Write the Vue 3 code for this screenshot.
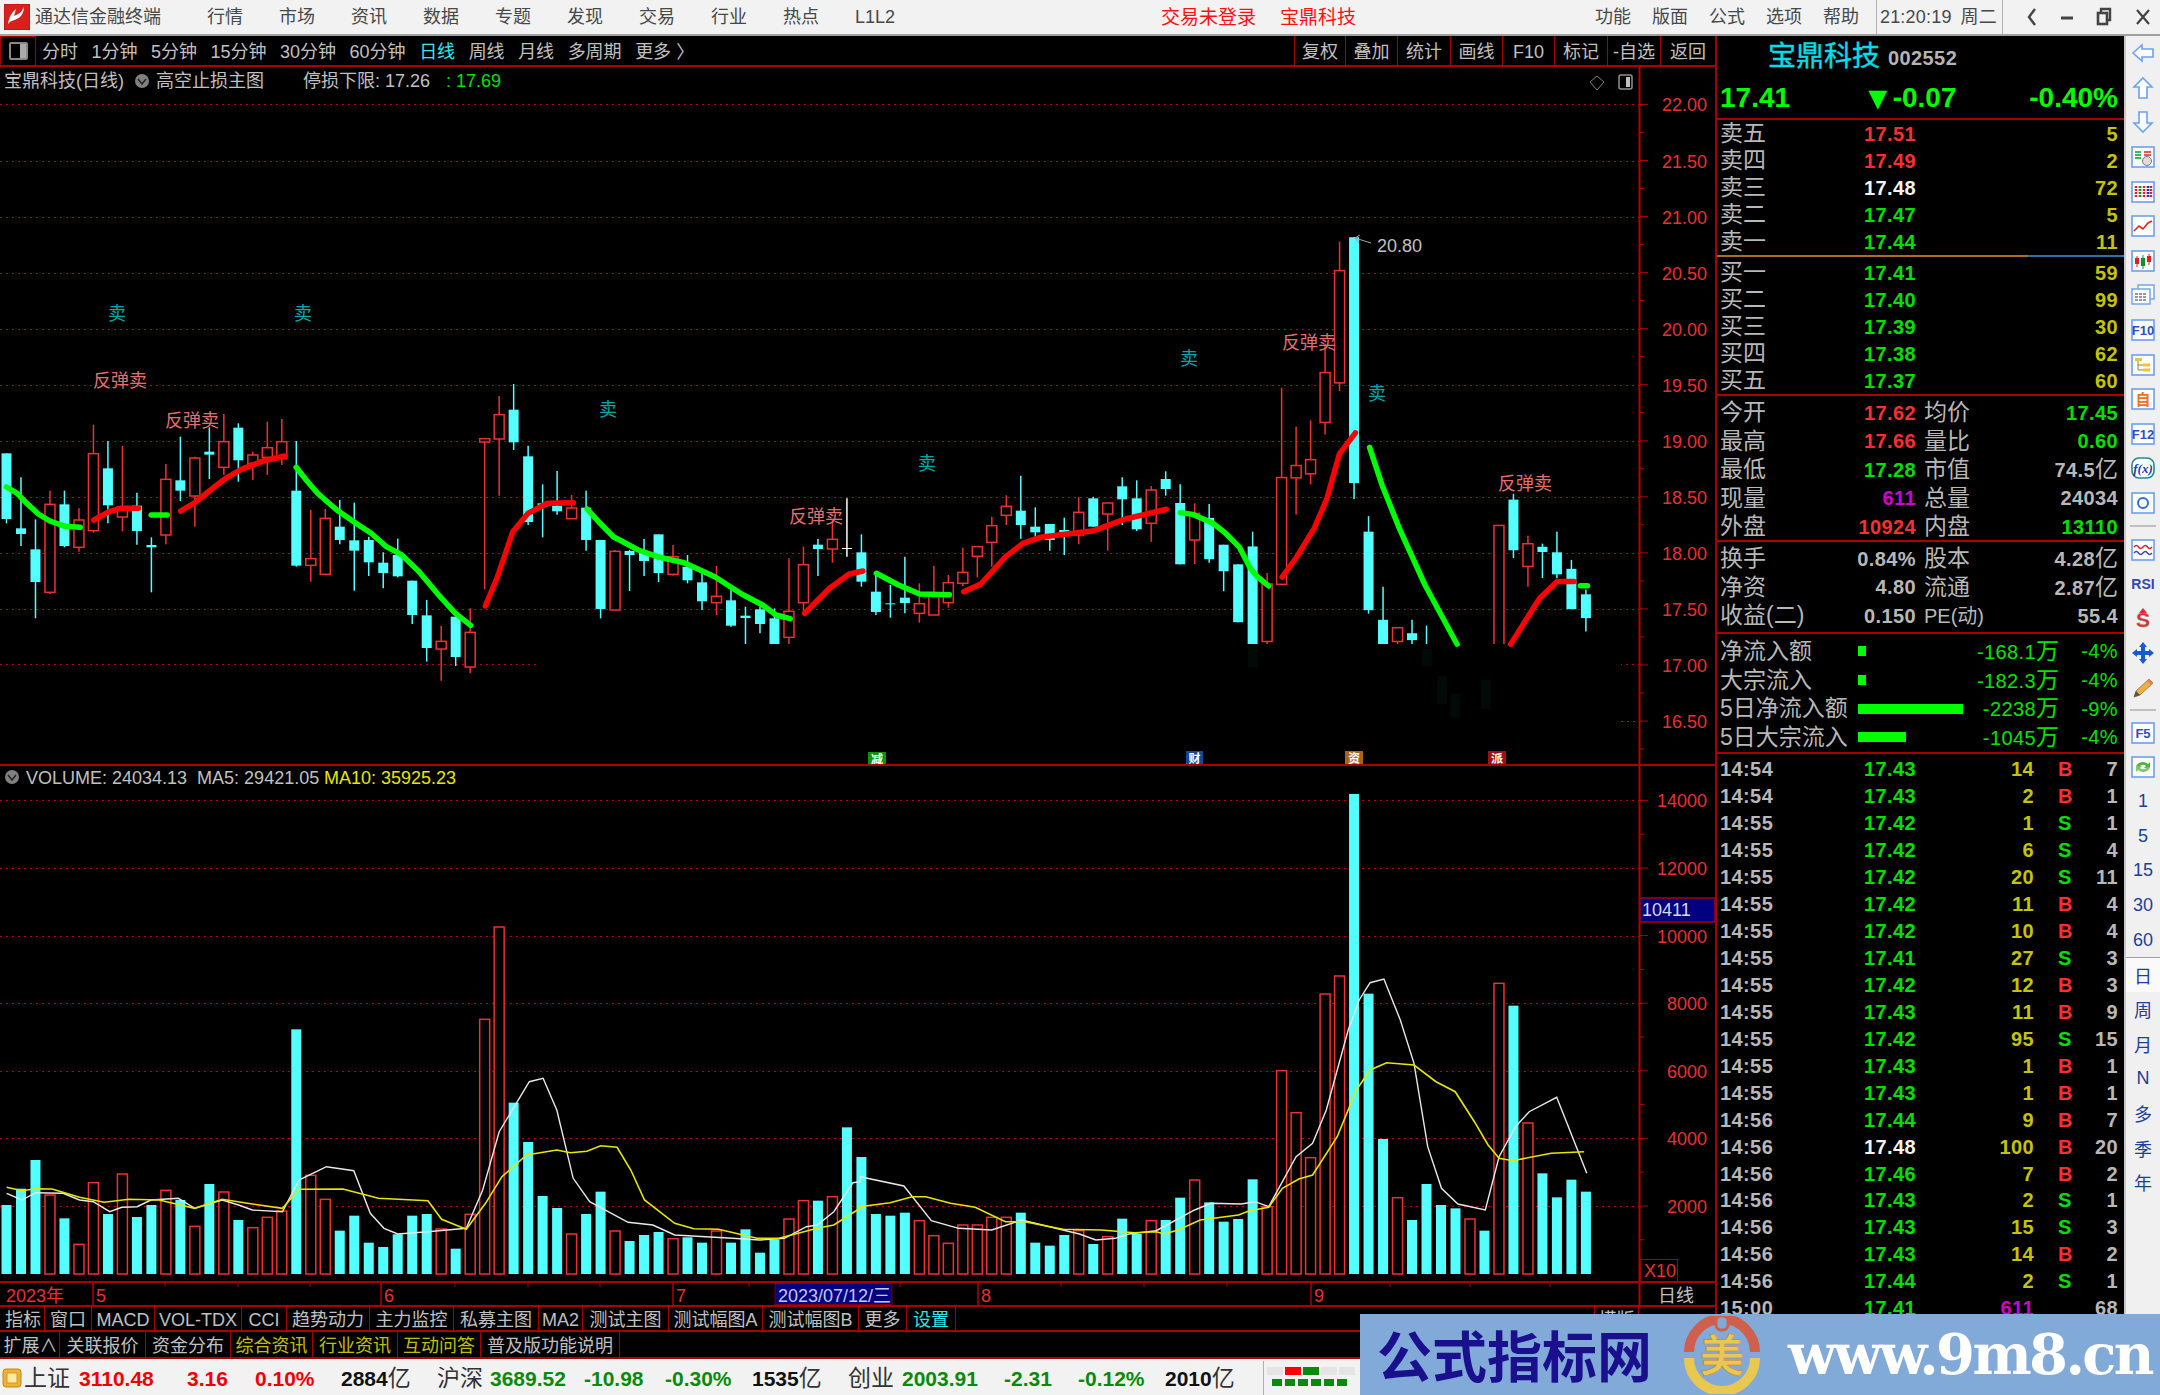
<script setup>
const X = i => 6.5 + 14.49 * i
const z7y = z => 340 + z / 3
const z9y = z => 220 + z / 2.904
const pY = p => 721 - (p - 16.5) * 112.1
const vY = v => 1273.6 - v * 0.0338

const c7 = [
[0,'c',340,537,340,550],[1,'c',565,582,412,618],[2,'c',628,726,538,835],[3,'r',493,757,452,762],[4,'c',493,618,452,622],
[5,'r',540,622,505,635],[6,'r',341,572,254,578],[7,'c',385,496,303,550],[8,'r',500,531,318,574],[9,'c',497,573,458,614],
[10,'c',615,622,592,757],[11,'r',418,585,372,613],[12,'c',421,452,290,483],[13,'r',354,468,350,560],[14,'c',335,344,262,417],
[15,'r',305,382,222,405],[16,'c',263,361,250,425],[17,'r',345,370,335,420],[18,'r',323,352,245,405],[19,'r',305,356,237,375],
[20,'c',452,677,303,680],[21,'r',656,676,510,725],[22,'r',535,703,507,703],[23,'c',560,600,480,613],[24,'c',601,632,488,752],
[25,'c',600,667,590,708],[26,'c',668,699,637,745],[27,'c',645,709,596,712],[28,'c',722,825,722,852],[29,'c',826,924,780,965],
[30,'r',904,927,857,1022],[31,'c',830,951,830,978],[32,'r',877,981,805,1000],[33,'r',296,306,296,748],[34,'r',224,297,168,467],
[35,'c',209,307,132,330],[36,'c',349,546,317,555],[37,'c',490,500,433,592],[38,'c',497,514,393,524],[39,'r',504,536,465,536],
[40,'c',503,600,452,632],[41,'c',600,807,600,835],[42,'r',634,810,630,810],[43,'c',633,645,630,753],[44,'c',637,663,597,708],
[45,'c',583,699,583,726],[46,'r',650,703,615,707],[47,'c',680,721,645,730],[48,'c',727,784,700,810],[49,'r',769,788,678,825],
[50,'c',781,857,750,860],[51,'c',827,834,800,920],[52,'c',808,852,800,880],[53,'c',835,920,805,920],[54,'r',814,892,655,920],
[55,'r',674,788,620,815],[56,'c',614,627,597,708],[57,'r',598,627,540,668],[58,'w',624,627,475,650],[59,'c',637,725,583,740],
[60,'c',755,816,695,825],[61,'c',790,793,735,833],[62,'c',773,789,650,820],[63,'r',791,820,730,848],[64,'r',765,825,678,825],
[65,'r',728,788,705,803],[66,'r',697,730,623,738],[67,'r',620,649,620,712],[68,'r',557,607,530,680],[69,'r',499,526,466,555],
[70,'c',512,555,407,596],[71,'c',560,577,502,590],[72,'c',552,600,552,632],[73,'c',570,577,533,645],[74,'r',517,585,472,613],
[75,'c',475,560,470,560],[76,'r',489,522,489,632],[77,'c',439,478,412,555],[78,'c',475,568,421,573],[79,'r',450,550,438,605],
[80,'c',417,447,394,467],[81,'c',489,673,433,673],[82,'r',520,600,490,672]]
const c9 = [
[83,'c',865,985,825,995],[84,'c',943,1020,943,1078],[85,'c',1000,1168,1000,1168],[86,'c',948,1240,905,1240],[87,'r',1057,1224,1025,1240],
[88,'r',748,1058,487,1058],[89,'r',713,749,600,855],[90,'r',696,737,582,768],[91,'r',443,588,360,623],[92,'r',147,473,63,497],
[93,'c',50,764,50,810],[94,'c',905,1133,860,1143],[95,'c',1161,1240,1065,1240],[96,'r',1184,1224,1184,1240],[97,'c',1200,1220,1161,1240],
[98,'c',1240,1240,1178,1240],[103,'r',887,1240,887,1240],[104,'c',812,959,795,982],[105,'r',940,1006,917,1065],[106,'c',949,964,940,1040],
[107,'c',965,1029,905,1040],[108,'c',1013,1130,987,1130],[109,'c',1087,1156,1073,1195]]
const candleColor = { c: '#54ffff', r: '#f03030', w: '#ffffff' }
const candles = [
  ...c7.map(d => [d[0], d[1], z7y(d[2]), z7y(d[3]), z7y(d[4]), z7y(d[5])]),
  ...c9.map(d => [d[0], d[1], z9y(d[2]), z9y(d[3]), z9y(d[4]), z9y(d[5])])
].map(d => ({ x: X(d[0]), col: candleColor[d[1]], red: d[1] === 'r', bt: d[2], bb: d[3], wt: d[4], wb: d[5] }))

const seg = (pts, xf, yf) => pts.map(p => `${(xf(p[0])).toFixed(1)},${(yf(p[1])).toFixed(1)}`).join(' ')
const x7 = z => z / 2.613, x8 = z => 600 + z / 2.613, x9 = z => 1150 + z / 2.8
const thick = [
 ['#00ff00', seg([[17,441],[45,460],[70,490],[100,522],[130,543],[170,559],[210,562]], x7, z7y)],
 ['#ff0000', seg([[245,540],[285,515],[315,505],[362,505]], x7, z7y)],
 ['#00ff00', seg([[395,525],[437,525]], x7, z7y)],
 ['#ff0000', seg([[472,513],[510,487],[550,450],[590,415],[630,388],[690,362],[745,348]], x7, z7y)],
 ['#00ff00', seg([[774,382],[800,420],[830,460],[880,510],[930,550],[970,580],[1010,620],[1050,645],[1095,695],[1150,770],[1190,820],[1230,856]], x7, z7y)],
 ['#ff0000', seg([[1268,798],[1300,710],[1340,575],[1380,520],[1430,490],[1498,488]], x7, z7y)],
 ['#00ff00', seg([[1534,507],[1568,550]], x7, z7y) + ' ' + seg([[35,590],[100,630],[150,650],[220,668],[300,710],[370,762],[425,795],[460,825],[497,836]], x8, z7y)],
 ['#ff0000', seg([[535,820],[600,745],[650,703],[687,693]], x8, z7y)],
 ['#00ff00', seg([[722,700],[780,735],[835,762],[913,764]], x8, z7y)],
 ['#ff0000', seg([[950,755],[995,732],[1060,650],[1105,610],[1150,592],[1290,572],[1370,538],[1480,508]], x8, z7y)],
 ['#00ff00', seg([[85,850],[120,855],[175,880],[210,908],[250,950],[280,1010],[300,1035],[332,1063]], x9, z9y)],
 ['#ff0000', seg([[370,1037],[410,980],[460,895],[495,810],[530,680],[575,618]], x9, z9y)],
 ['#00ff00', seg([[615,660],[650,770],[700,900],[770,1060],[860,1232]], x9, z9y)],
 ['#ff0000', seg([[1010,1232],[1090,1100],[1140,1050],[1187,1050]], x9, z9y)],
 ['#00ff00', seg([[1205,1062],[1225,1062]], x9, z9y)]
].map(([col, pts]) => ({ col, pts }))
const ghost = [[288,1232,1300],[775,1245,1295],[818,1325,1405],[855,1375,1445],[940,1335,1420]]
  .map(g => ({ x: x9(g[0]) - 5, y: z9y(g[1]), h: (g[2] - g[1]) / 2.904 }))

const mainGrid = [17.5,18,18.5,19,19.5,20,20.5,21,21.5,22].map(pY)
const axisP = ['22.00','21.50','21.00','20.50','20.00','19.50','19.00','18.50','18.00','17.50','17.00','16.50'].map(t => ({ t, y: pY(+t) + 7 }))
const mainTicks = []
for (let k = 0; k <= 23; k++) mainTicks.push({ y: pY(16.25 + k * 0.25), l: k % 2 ? 8 : 4 })
const sell = [[117,313],[303,313],[608,409],[927,463],[1189,358],[1377,393]].map(p => ({ x: p[0], y: p[1] }))
const rebound = [[93,387],[165,427],[789,523],[1282,349],[1498,490]].map(p => ({ x: p[0], y: p[1] }))
const badges = [
 { x: 868, w: 18, y: 752, f: '#109010', t: '减' }, { x: 1186, w: 17, y: 751, f: '#104a90', t: '财' },
 { x: 1345, w: 18, y: 751, f: '#a86414', t: '资' }, { x: 1488, w: 18, y: 751, f: '#a01010', t: '派' }
]

const vz10 = [[765,'c'],[716,'c'],[630,'c'],[735,'r'],[805,'c'],[883,'r'],[698,'r'],[792,'c'],[672,'r'],[801,'c'],[765,'c'],[721,'r'],[750,'c'],[829,'r'],[702,'c'],[726,'r'],[810,'c'],[833,'r'],[802,'r'],[783,'r'],[238,'c'],[676,'r'],[748,'r'],[842,'c'],[797,'c'],[878,'c'],[891,'c'],[853,'c'],[797,'c'],[792,'c'],[837,'r'],[896,'c'],[793,'r'],[208,'r'],[-69,'r'],[458,'c'],[576,'c'],[738,'c'],[774,'c'],[852,'r'],[792,'c'],[725,'c'],[843,'r'],[873,'c'],[855,'c'],[846,'c'],[866,'r'],[862,'c'],[878,'c'],[843,'r'],[878,'c'],[838,'c'],[908,'c'],[868,'c'],[807,'r'],[752,'r'],[752,'c'],[740,'r'],[532,'c']]
const vz11 = [[1131,'c'],[1302,'c'],[1307,'c'],[1298,'c'],[1322,'r'],[1367,'r'],[1390,'r'],[1335,'r'],[1335,'r'],[1312,'r'],[1312,'r'],[1298,'c'],[1388,'c'],[1397,'c'],[1365,'c'],[1352,'r'],[1392,'c'],[1370,'r'],[1316,'c'],[1362,'c'],[1322,'r'],[1320,'c'],[1253,'c'],[1200,'r'],[1267,'c'],[1325,'c'],[1317,'c'],[1198,'c'],[1280,'r'],[872,'r'],[998,'r'],[1133,'r'],[642,'r'],[588,'r'],[42,'c'],[641,'c'],[1077,'c'],[1253,'r'],[1320,'c'],[1212,'c'],[1275,'c'],[1285,'c'],[1317,'r'],[1352,'c'],[610,'r'],[677,'c'],[1029,'r'],[1180,'c'],[1252,'c'],[1199,'c'],[1235,'c']]
const bars = [
  ...vz10.map((d, i) => ({ i, top: 950 + d[0] / 3, k: d[1] })),
  ...vz11.map((d, i) => ({ i: i + 59, top: 780 + d[0] / 3, k: d[1] }))
].map(b => ({ x: X(b.i), top: b.top, red: b.k === 'r', h: 1274 - b.top }))

const a = z => z / 1.823
const white = seg([[12,730],[40,750],[65,728],[115,730],[145,750],[170,755],[200,785],[222,772],[250,770],[275,750],[325,745],[355,775],[405,750],[435,765],[460,780],[515,785],[545,690],[595,650],[645,662],[675,790],[700,835],[725,852],[780,845],[850,835],[880,720],[910,545],[965,395],[990,385],[1015,480],[1045,685],[1075,755],[1145,817],[1190,825],[1230,855],[1335,865],[1385,870],[1430,865],[1470,830],[1490,825],[1520,785],[1555,698],[1568,695]], a, z => 950 + z / 3)
  + ' ' + seg([[0,1190],[80,1218],[130,1322],[180,1345],[240,1350],[295,1320],[400,1362],[430,1380],[465,1375],[490,1362],[540,1352],[610,1290],[640,1270],[695,1272],[720,1265],[745,1280],[795,1130],[825,1090],[850,990],[890,750],[910,660],[930,608],[955,597],[985,720],[1010,850],[1035,1100],[1060,1225],[1090,1272],[1140,1290],[1165,1130],[1195,1040],[1220,995],[1270,952],[1325,1180]], z => 860 + a(z), z => 780 + z / 3)
const yellow = seg([[12,712],[40,722],[65,716],[95,717],[145,742],[190,757],[235,748],[290,750],[355,775],[405,748],[460,762],[515,775],[545,718],[625,717],[690,745],[780,752],[805,808],[850,838],[885,760],[915,680],[960,615],[1015,600],[1040,608],[1070,604],[1095,587],[1125,592],[1150,660],[1175,750],[1230,820],[1265,836],[1310,838],[1380,865],[1420,865],[1490,835],[1520,825],[1568,775]], a, z => 950 + z / 3)
  + ' ' + seg([[0,1280],[55,1268],[95,1250],[120,1250],[165,1270],[210,1282],[265,1325],[300,1325],[370,1348],[440,1350],[500,1358],[540,1355],[555,1362],[580,1350],[620,1320],[690,1305],[710,1292],[745,1282],[770,1225],[800,1197],[825,1185],[870,1070],[905,930],[930,870],[960,848],[1010,855],[1050,905],[1085,935],[1120,1025],[1145,1095],[1165,1135],[1190,1142],[1260,1120],[1320,1115]], z => 860 + a(z), z => 780 + z / 3)
const volAxis = [14000,12000,10000,8000,6000,4000,2000].map(v => ({ t: String(v), y: vY(v) }))
const volTicks = []
for (let v = 1000; v <= 14000; v += 1000) volTicks.push({ y: vY(v), l: v % 2000 ? 4 : 8 })

const dateTicks = [165,238,310,455,528,600,749,820,900,1061,1144,1227,1390,1470,1550]
const months = [{ x: 93, t: '5' }, { x: 381, t: '6' }, { x: 673, t: '7' }, { x: 978, t: '8' }, { x: 1311, t: '9' }]

const menuL = ['行情','市场','资讯','数据','专题','发现','交易','行业','热点','L1L2']
const menuR = ['功能','版面','公式','选项','帮助']
const tools = [['分时'],['1分钟'],['5分钟'],['15分钟'],['30分钟'],['60分钟'],['日线',1],['周线'],['月线'],['多周期'],['更多 〉']].map(t => ({ t: t[0], on: !!t[1] }))
const toolR = [['复权',51],['叠加',52],['统计',53],['画线',52],['F10',52],['标记',53],['-自选',53],['返回',55]].map(t => ({ t: t[0], w: t[1] }))
const row1 = [['指标',43],['窗口',47],['MACD',63],['VOL-TDX',87],['CCI',45],['趋势动力',83],['主力监控',84],['私募主图',85],['MA2',44],['测试主图',86],['测试幅图A',94],['测试幅图B',96],['更多',48],['设置',49,'cy']].map(t => ({ t: t[0], w: t[1], c: t[2] || '' }))
const row2 = [['扩展∧',58],['关联报价',86],['资金分布',85],['综合资讯',82,'ye'],['行业资讯',85,'ye'],['互动问答',83,'ye'],['普及版功能说明',139]].map(t => ({ t: t[0], w: t[1], c: t[2] || '' }))

const sellRows = [['卖五','17.51','r','5'],['卖四','17.49','r','2'],['卖三','17.48','w','72'],['卖二','17.47','g','5'],['卖一','17.44','g','11']]
const buyRows = [['买一','17.41','g','59'],['买二','17.40','g','99'],['买三','17.39','g','30'],['买四','17.38','g','62'],['买五','17.37','g','60']]
const stats = [
 ['今开','17.62','r','均价','17.45','g'],['最高','17.66','r','量比','0.60','g'],['最低','17.28','g','市值','74.5','y'],
 ['现量','611','m','总量','24034','n'],['外盘','10924','r','内盘','13110','g']]
const stats2 = [['换手','0.84%','n','股本','4.28','y'],['净资','4.80','n','流通','2.87','y'],['收益(二)','0.150','n','PE(动)','55.4','n']]
const flows = [['净流入额',8,'-168.1','-4%'],['大宗流入',8,'-182.3','-4%'],['5日净流入额',105,'-2238','-9%'],['5日大宗流入',48,'-1045','-4%']]
const ticks = [
 ['14:54','17.43','14','B','7'],['14:54','17.43','2','B','1'],['14:55','17.42','1','S','1'],['14:55','17.42','6','S','4'],['14:55','17.42','20','S','11'],
 ['14:55','17.42','11','B','4'],['14:55','17.42','10','B','4'],['14:55','17.41','27','S','3'],['14:55','17.42','12','B','3'],['14:55','17.43','11','B','9'],
 ['14:55','17.42','95','S','15'],['14:55','17.43','1','B','1'],['14:55','17.43','1','B','1'],['14:56','17.44','9','B','7'],['14:56','17.48','100','B','20'],
 ['14:56','17.46','7','B','2'],['14:56','17.43','2','S','1'],['14:56','17.43','15','S','3'],['14:56','17.43','14','B','2'],['14:56','17.44','2','S','1'],['15:00','17.41','611','','68']]

const box = '<rect x="1" y="2" width="22" height="20" fill="#fff" stroke="#6aa2ee" stroke-width="1.6"/>'
const ft = (t, c = '#2a50c8', s = 13) => `<text x="12" y="17" text-anchor="middle" font-family="Liberation Sans" font-size="${s}" font-weight="bold" fill="${c}">${t}</text>`
const arrow = d => `<path d="${d}" fill="#fff" stroke="#6aa2ee" stroke-width="1.6"/>`
const slots1 = [
 arrow('M2 12 11 4V8H22V16H11V20Z'), arrow('M12 2 21 11H16V22H8V11H3Z'), arrow('M12 22 21 13H16V2H8V13H3Z'),
 box + '<path d="M4 7h6M4 10h6M4 13h6" stroke="#0a9a30" stroke-width="1.6"/><path d="M13 7h7M13 10h7" stroke="#e02020" stroke-width="1.6"/><circle cx="16" cy="16" r="4.5" fill="#ddd" stroke="#777"/>',
 box + '<path d="M5 6v12M9 6v12M13 6v12M17 6v12M20 6v12" stroke-dasharray="2 1" stroke-width="2.4" stroke="#e02020"/><path d="M9 6v12" stroke-dasharray="2 1" stroke-width="2.4" stroke="#109030"/><path d="M17 6v12" stroke-dasharray="2 1" stroke-width="2.4" stroke="#2030d0"/>',
 box + '<polyline points="3,17 8,12 12,15 17,9 21,7" fill="none" stroke="#e82020" stroke-width="1.6"/>',
 box + '<path d="M6 7v11M18 5v11" stroke="#e02020"/><rect x="4" y="9" width="4" height="6" fill="#e02020"/><path d="M12 6v14" stroke="#109030"/><rect x="10" y="9" width="4" height="8" fill="#109030"/><rect x="16" y="7" width="4" height="6" fill="#e02020"/>',
 '<rect x="7" y="2" width="16" height="14" fill="#fff" stroke="#6aa2ee" stroke-width="1.4"/><rect x="1" y="6" width="18" height="15" fill="#fff" stroke="#6aa2ee" stroke-width="1.4"/><path d="M4 11h12M4 14h12M4 17h12" stroke="#777" stroke-width="1.6" stroke-dasharray="3 1"/>',
 box + ft('F10'),
 box + '<rect x="4" y="5" width="7" height="3" fill="#f0c040"/><path d="M7 8v9h5M7 12h5" stroke="#a08020" fill="none"/><rect x="12" y="10.5" width="7" height="3" fill="#f0c040"/><rect x="12" y="15.5" width="7" height="3" fill="#f0c040"/>',
 box + '<text x="12" y="18" text-anchor="middle" font-family="Noto Sans CJK SC" font-size="15" font-weight="bold" fill="#f07020">自</text>',
 box + ft('F12'),
 '<rect x="1" y="2" width="22" height="20" rx="7" fill="#fff" stroke="#208a90" stroke-width="1.6"/><text x="12" y="17" text-anchor="middle" font-family="Liberation Serif" font-style="italic" font-size="13" font-weight="bold" fill="#1a40a0">f(x)</text>',
 box + '<circle cx="12" cy="12" r="5" fill="none" stroke="#3070d0" stroke-width="2"/>'
]
const slots2 = [
 box + '<path d="M3 9q2.5-3 4.5 0t4.5 0 4.5 0 4.5 0" fill="none" stroke="#e02020" stroke-width="1.4"/><path d="M3 15q2.5-3 4.5 0t4.5 0 4.5 0 4.5 0" fill="none" stroke="#3040d0" stroke-width="1.4"/>',
 ft('RSI', '#3048b0', 14),
 '<text x="12" y="20" text-anchor="middle" font-family="Liberation Sans" font-size="21" font-weight="bold" fill="#d83030" stroke="#a0a0a0" stroke-width=".4">S</text><path d="M12 1 8 6h8Z" fill="#d83030"/>',
 '<path d="M12 1 16 6H14V10H18V8L23 12 18 16V14H14V18H16L12 23 8 18H10V14H6V16L1 12 6 8V10H10V6H8Z" fill="#1a5ad0"/>',
 '<path d="M3 21 5 15 18 3 22 7 9 19Z" fill="#f0b040" stroke="#a08050"/><path d="M3 21 5 15 9 19Z" fill="#555"/><path d="M18 3 22 7 20 9 16 5Z" fill="#e88060"/>'
]
const slots3 = [
 box + ft('F5'),
 box + '<path d="M5 12a7 6 0 0 1 12-3l2-2v6h-6l2-2a4 3 0 0 0-7 1Z" fill="#50b040"/><path d="M19 12a7 6 0 0 1-12 3l-2 2v-6h6l-2 2a4 3 0 0 0 7-1Z" fill="#80c870"/>'
]
const periods = ['1','5','15','30','60','日','周','月','N','多','季','年']
const statusItems = [
 { x: 24, t: '上证', cn: 1 }, { x: 79, t: '3110.48', c: '#f00000' }, { x: 187, t: '3.16', c: '#f00000' }, { x: 255, t: '0.10%', c: '#f00000' },
 { x: 341, t: '2884', c: '#111', u: '亿' }, { x: 437, t: '沪深', cn: 1 }, { x: 490, t: '3689.52', c: '#0a8a0a' }, { x: 584, t: '-10.98', c: '#0a8a0a' },
 { x: 665, t: '-0.30%', c: '#0a8a0a' }, { x: 752, t: '1535', c: '#111', u: '亿' }, { x: 848, t: '创业', cn: 1 }, { x: 902, t: '2003.91', c: '#0a8a0a' },
 { x: 1004, t: '-2.31', c: '#0a8a0a' }, { x: 1078, t: '-0.12%', c: '#0a8a0a' }, { x: 1165, t: '2010', c: '#111', u: '亿' }, { x: 1263, t: '' }
].map((s, i, arr) => ({ ...s, w: i < arr.length - 1 ? arr[i + 1].x - s.x : 0 }))
const meterTop = ['#e4e4e4', '#ff0000', '#0a8a0a', '#e4e4e4', '#e4e4e4']
const meterDots = [1, 2, 3, 4, 5, 6]
</script>

<template>
  <div class="app">
    <header class="menu">
      <svg class="logo" viewBox="0 0 26 26" width="26" height="26">
        <rect width="26" height="26" fill="#d8201e" stroke="#a51412"/>
        <path d="M20 3 C17 9 15 10 10 12 L12 5 C8 8 5 13 4 20 C8 15 11 17 16 13 C18 11 20 7 20 3Z" fill="#fff"/>
      </svg>
      <span class="title">通达信金融终端</span>
      <nav class="nav">
        <span v-for="m in menuL" :key="m">{{ m }}</span>
      </nav>
      <div class="red-group"><span>交易未登录</span><span>宝鼎科技</span></div>
      <nav class="nav nav-r">
        <span v-for="m in menuR" :key="m">{{ m }}</span>
      </nav>
      <div class="clock"><span>21:20:19</span><span>周二</span></div>
      <div class="winbtns">
        <svg width="14" height="24" viewBox="0 0 14 24"><path d="M10 4 4 12 10 20" fill="none" stroke="#444" stroke-width="2.4"/></svg>
        <svg width="14" height="24" viewBox="0 0 14 24"><path d="M1 13h12" stroke="#444" stroke-width="3"/></svg>
        <svg width="18" height="24" viewBox="0 0 18 24"><path d="M6 7V4h9v11h-3" fill="none" stroke="#444" stroke-width="2.4"/><rect x="3" y="8" width="9" height="11" fill="none" stroke="#444" stroke-width="2.6"/></svg>
        <svg width="18" height="24" viewBox="0 0 18 24"><path d="M3 5 15 19M15 5 3 19" stroke="#444" stroke-width="2.2"/></svg>
      </div>
    </header>

    <div class="body">
      <section class="left">
        <div class="toolbar">
          <div class="tb-icon"><i></i></div>
          <div class="tb-items">
            <span v-for="t in tools" :key="t.t" :class="{ on: t.on }">{{ t.t }}</span>
          </div>
          <div class="tb-right">
            <span v-for="t in toolR" :key="t.t" :style="{ width: t.w + 'px' }">{{ t.t }}</span>
          </div>
        </div>

        <svg class="pane main" width="1715" height="697" viewBox="0 67 1715 697">
          <line v-for="y in mainGrid" :key="y" x1="0" x2="1639" :y1="Math.round(y) + .5" :y2="Math.round(y) + .5" class="dots"/>
          <line x1="0" x2="1639" y1="664.5" y2="664.5" class="dots"/>
          <line x1="1621" x2="1639" y1="721.5" y2="721.5" class="dots"/>
          <g v-for="(c, i) in candles" :key="'c' + i">
            <line :x1="c.x" :x2="c.x" :y1="c.wt" :y2="c.wb" :stroke="c.col" stroke-width="1.5"/>
            <rect v-if="c.bb > c.bt" :x="c.x - 5" :y="c.bt" width="10" :height="c.bb - c.bt" :fill="c.red ? '#000' : c.col" :stroke="c.col" :stroke-width="c.red ? 1.5 : 0"/>
          </g>
          <rect x="538" y="644" width="1083" height="106" fill="#000"/>
          <rect v-for="(g, i) in ghost" :key="'g' + i" :x="g.x" :y="g.y" width="10" :height="g.h" fill="#020a08"/>
          <polyline v-for="(l, i) in thick" :key="'l' + i" :points="l.pts" fill="none" :stroke="l.col" stroke-width="5.5" stroke-linejoin="round" stroke-linecap="round"/>
          <text v-for="(s, i) in sell" :key="'s' + i" :x="s.x" :y="s.y + 7" text-anchor="middle" class="tx sell">卖</text>
          <text v-for="(r, i) in rebound" :key="'r' + i" :x="r.x" :y="r.y" class="tx rebound">反弹卖</text>
          <path d="M1371 243 1355 238M1355 238 1360 235M1355 238 1359 243" stroke="#a0a0a0" fill="none"/>
          <text x="1377" y="252" class="tx gray num">20.80</text>
          <g v-for="b in badges" :key="b.t">
            <rect :x="b.x" :y="b.y" :width="b.w" height="14" :fill="b.f"/>
            <text :x="b.x + b.w / 2" :y="b.y + 12" text-anchor="middle" class="tx badge">{{ b.t }}</text>
          </g>

          <text x="4" y="87" class="tx gray">宝鼎科技(日线)</text>
          <circle cx="142" cy="81" r="7" fill="#808080"/>
          <path d="M138 79 142 84 146 79" fill="none" stroke="#222" stroke-width="1.5"/>
          <text x="156" y="87" class="tx gray">高空止损主图</text>
          <text x="303" y="87" class="tx gray">停损下限: 17.26</text>
          <text x="446" y="87" class="tx green num">: 17.69</text>
          <path d="M1597 76 1604 82 1597 90 1590 82Z" fill="none" stroke="#808080"/>
          <rect x="1619" y="75" width="13" height="14" rx="2" fill="none" stroke="#909090" stroke-width="1.5"/>
          <rect x="1626" y="77" width="4" height="10" fill="#c0c0c0"/>

          <line x1="1639.5" x2="1639.5" y1="67" y2="764" class="axis"/>
          <line v-for="(t, i) in mainTicks" :key="'mt' + i" x1="1640" :x2="1640 + t.l" :y1="t.y" :y2="t.y" stroke="#b00000"/>
          <text v-for="a2 in axisP" :key="a2.t" x="1662" :y="a2.y" class="tx axis-t">{{ a2.t }}</text>
        </svg>

        <svg class="pane vol" width="1715" height="515" viewBox="0 766 1715 515">
          <line v-for="v in volAxis" :key="'d' + v.t" x1="0" x2="1639" :y1="Math.round(v.y) + .5" :y2="Math.round(v.y) + .5" class="dots"/>
          <g v-for="(b, i) in bars" :key="'b' + i">
            <rect :x="b.x - 5" :y="b.top" width="10" :height="b.h" :fill="b.red ? '#000' : '#54ffff'" :stroke="b.red ? '#f03030' : 'none'" stroke-width="1.5"/>
          </g>
          <polyline :points="white" fill="none" stroke="#e8e8e8" stroke-width="1.4"/>
          <polyline :points="yellow" fill="none" stroke="#e6e600" stroke-width="1.6"/>

          <circle cx="12" cy="777" r="7" fill="#808080"/>
          <path d="M8 775 12 780 16 775" fill="none" stroke="#222" stroke-width="1.5"/>
          <text x="26" y="784" class="tx gray num">VOLUME: 24034.13&#160;&#160;MA5: 29421.05</text>
          <text x="324" y="784" class="tx yellow num">MA10: 35925.23</text>

          <line x1="1639.5" x2="1639.5" y1="766" y2="1281" class="axis"/>
          <line v-for="(t, i) in volTicks" :key="'vt' + i" x1="1640" :x2="1640 + t.l" :y1="t.y" :y2="t.y" stroke="#b00000"/>
          <text v-for="v in volAxis" :key="v.t" x="1707" :y="v.y + 7" text-anchor="end" class="tx axis-t">{{ v.t }}</text>
          <rect x="1640" y="898" width="75" height="24" fill="#000080" stroke="#a00000" stroke-width="1.5"/>
          <text x="1642" y="916" class="tx num pale">10411</text>
          <rect x="1640.5" y="1259.5" width="37" height="23" fill="none" stroke="#a00000"/>
          <text x="1644" y="1277" class="tx axis-t">X10</text>
        </svg>

        <svg class="pane date" width="1715" height="22" viewBox="0 1283 1715 22">
          <line v-for="x in dateTicks" :key="x" :x1="x" :x2="x" y1="1283" y2="1287" stroke="#b00000"/>
          <text x="6" y="1302" class="tx axis-t">2023年</text>
          <g v-for="m in months" :key="m.t">
            <line :x1="m.x" :x2="m.x" y1="1283" y2="1305" stroke="#b00000" stroke-width="1.5"/>
            <text :x="m.x + 3" y="1302" class="tx axis-t">{{ m.t }}</text>
          </g>
          <rect x="775" y="1283.5" width="117" height="21" fill="#000080" stroke="#800000"/>
          <text x="778" y="1302" class="tx num lav">2023/07/12/三</text>
          <line x1="1639.5" x2="1639.5" y1="1283" y2="1305" class="axis"/>
          <text x="1658" y="1302" class="tx gray">日线</text>
        </svg>

        <div class="btnrow r1">
          <span v-for="b in row1" :key="b.t" :class="b.c" :style="{ width: b.w + 'px' }">{{ b.t }}</span>
          <em class="spacer"></em>
          <span class="tpl">模版</span>
          <span class="last"></span>
        </div>
        <div class="btnrow r2">
          <span v-for="b in row2" :key="b.t" :class="b.c" :style="{ width: b.w + 'px' }">{{ b.t }}</span>
        </div>
      </section>

      <aside class="panel">
        <div class="head">
          <div class="name"><b>宝鼎科技</b><span>002552</span></div>
          <div class="quote"><span>17.41</span><span><i class="dn">▼</i>-0.07</span><span>-0.40%</span></div>
        </div>
        <div class="sec sell-sec">
          <div v-for="r in sellRows" :key="r[0]" class="qr">
            <span class="lab">{{ r[0] }}</span><span :class="['v', r[2]]">{{ r[1] }}</span><span class="v y qty">{{ r[3] }}</span>
          </div>
        </div>
        <div class="split"><i></i><i></i></div>
        <div class="sec buy-sec">
          <div v-for="r in buyRows" :key="r[0]" class="qr">
            <span class="lab">{{ r[0] }}</span><span :class="['v', r[2]]">{{ r[1] }}</span><span class="v y qty">{{ r[3] }}</span>
          </div>
        </div>
        <div class="sec st-sec">
          <div v-for="r in stats" :key="r[0]" class="sr">
            <span class="lab">{{ r[0] }}</span><span :class="['v', r[2]]">{{ r[1] }}</span><span></span>
            <span class="lab">{{ r[3] }}</span>
            <span v-if="r[5] === 'y'" class="v n">{{ r[4] }}<small>亿</small></span>
            <span v-else :class="['v', r[5]]">{{ r[4] }}</span>
          </div>
        </div>
        <div class="sec st2-sec">
          <div v-for="r in stats2" :key="r[0]" class="sr">
            <span class="lab">{{ r[0] }}</span><span :class="['v', r[2]]">{{ r[1] }}</span><span></span>
            <span class="lab" :class="{ pe: r[3].startsWith('PE') }">{{ r[3] }}</span>
            <span v-if="r[5] === 'y'" class="v n">{{ r[4] }}<small>亿</small></span>
            <span v-else :class="['v', r[5]]">{{ r[4] }}</span>
          </div>
        </div>
        <div class="sec fl-sec">
          <div v-for="r in flows" :key="r[0]" class="fr">
            <span class="lab">{{ r[0] }}</span>
            <span class="barcell"><i :style="{ width: r[1] + 'px' }"></i></span>
            <span class="v gg">{{ r[2] }}<small>万</small></span>
            <span class="v gg">{{ r[3] }}</span>
          </div>
        </div>
        <div class="ticks">
          <div v-for="(r, i) in ticks" :key="i" class="tr">
            <span class="v n tm">{{ r[0] }}</span>
            <span :class="['v', r[1] === '17.48' ? 'w' : 'g']">{{ r[1] }}</span>
            <span :class="['v', r[2] === '611' ? 'm' : 'y']">{{ r[2] }}</span>
            <span :class="['v', 'bs', r[3] === 'B' ? 'r' : 'g']">{{ r[3] }}</span>
            <span class="v n">{{ r[4] }}</span>
          </div>
        </div>
      </aside>

      <aside class="side">
        <div v-for="(s, i) in slots1" :key="'a' + i" class="slot"><svg width="24" height="24" viewBox="0 0 24 24" v-html="s"></svg></div>
        <div class="sep s1"></div>
        <div v-for="(s, i) in slots2" :key="'b' + i" class="slot"><svg width="24" height="24" viewBox="0 0 24 24" v-html="s"></svg></div>
        <div class="sep s2"></div>
        <div v-for="(s, i) in slots3" :key="'c' + i" class="slot"><svg width="24" height="24" viewBox="0 0 24 24" v-html="s"></svg></div>
        <div v-for="p in periods" :key="p" class="slot period" :class="{ sel: p === '日' }">{{ p }}</div>
      </aside>
    </div>

    <footer class="status">
      <svg class="st-ico" width="20" height="20" viewBox="0 0 20 20">
        <rect x="1" y="1" width="18" height="18" rx="3" fill="#f0b030" stroke="#c08820"/>
        <rect x="5" y="5" width="10" height="10" fill="#ffe9a0" stroke="#c89a30"/>
      </svg>
      <span v-for="s in statusItems" :key="s.x" class="st-item" :class="{ cn: s.cn }" :style="{ width: s.w + 'px', color: s.c }">{{ s.t }}<small v-if="s.u">{{ s.u }}</small></span>
      <div class="meter">
        <div class="m-top"><i v-for="(c, i) in meterTop" :key="i" :style="{ background: c }"></i></div>
        <div class="m-bot"><i v-for="d in meterDots" :key="d"></i></div>
      </div>
    </footer>

    <div class="mark">
      <span class="mk-cn">公式指标网</span>
      <svg class="mk-logo" width="80" height="78" viewBox="0 0 80 78">
        <path d="M7 36 A33 33 0 0 1 73 36" fill="none" stroke="#d0604e" stroke-width="10"/>
        <path d="M7 42 A33 33 0 0 0 73 42" fill="none" stroke="#e8c850" stroke-width="10"/>
        <rect x="34" y="0" width="12" height="14" rx="5" fill="#82aad8" stroke="#d0604e" stroke-width="3"/>
        <text x="40" y="56" text-anchor="middle" font-family="Noto Sans CJK SC" font-weight="bold" font-size="44" fill="#e8c850" stroke="#c88040" stroke-width=".6">美</text>
      </svg>
      <span class="mk-en">www.9m8.cn</span>
    </div>
  </div>
</template>

<style scoped>
.app { position: relative; width: 2160px; height: 1395px; background: #000; overflow: hidden; display: flex; flex-direction: column; font-family: "Liberation Sans", "Noto Sans CJK SC", sans-serif; }
span, b { line-height: 1; white-space: nowrap; }

.menu { height: 36px; flex: none; box-sizing: border-box; background: #f2f2f2; border-bottom: 2px solid #a0a0a0; display: flex; align-items: center; font-size: 18px; color: #484848; }
.logo { margin-left: 4px; flex: none; }
.title { margin-left: 5px; }
.nav { display: flex; gap: 36px; margin-left: 46px; }
.red-group { margin-left: auto; display: flex; gap: 24px; color: #ff1010; font-size: 19px; }
.nav-r { margin-left: 239px; gap: 21px; }
.clock { margin-left: 17px; height: 34px; box-sizing: border-box; border: solid #b0b0b0; border-width: 0 1px; padding: 0 5px 0 3px; display: flex; gap: 9px; align-items: center; letter-spacing: .2px; }
.winbtns { width: 157px; display: flex; align-items: center; gap: 21px; padding-left: 22px; box-sizing: border-box; }

.body { flex: 1; display: flex; min-height: 0; }
.left { width: 1715px; flex: none; display: flex; flex-direction: column; }
.toolbar { height: 31px; flex: none; box-sizing: border-box; border-bottom: 2px solid #a80000; display: flex; align-items: center; font-size: 18px; color: #c0c0c0; }
.tb-icon { width: 36px; height: 29px; box-sizing: border-box; border: solid #a80000; border-width: 1px 1px 0 1px; display: flex; align-items: center; justify-content: center; flex: none; }
.tb-icon i { width: 15px; height: 14px; border: 2px solid #888; border-radius: 2px; box-shadow: inset -6px 0 0 #aaa; }
.tb-items { margin-left: 6px; display: flex; gap: 13.5px; padding-top: 2px; }
.tb-items .on { color: #35e8f0; }
.tb-right { margin-left: auto; display: flex; height: 29px; }
.tb-right span { box-sizing: border-box; border-left: 1px solid #a80000; display: flex; align-items: center; justify-content: center; padding-top: 2px; }

.pane { display: block; flex: none; background: #000; }
.main, .vol, .date { border-bottom: 2px solid #a80000; }
.dots { stroke: #b80000; stroke-width: 1; stroke-dasharray: 2 4; }
.axis { stroke: #b80000; stroke-width: 2; }
.tx { font-family: "Liberation Sans", "Noto Sans CJK SC", sans-serif; font-size: 18px; }
.sell { fill: #00a8a8; }
.rebound { fill: #e07070; }
.gray { fill: #c0c0c0; }
.green { fill: #00e000; }
.yellow { fill: #e6e600; }
.axis-t { fill: #e83030; }
.pale { fill: #d8d8e8; }
.lav { fill: #c8c8f0; }
.badge { fill: #fff; font-size: 12px; font-weight: bold; }

.btnrow { flex: none; box-sizing: border-box; display: flex; padding-left: 2px; border-bottom: 2px solid #a80000; font-size: 18px; color: #c0c0c0; }
.btnrow span { box-sizing: border-box; border-right: 1px solid #a80000; display: flex; align-items: center; justify-content: center; }
.r1 { height: 25px; }
.r1 span { padding-top: 2px; }
.r2 { height: 27px; }
.r2 span { padding-top: 3px; }
.btnrow .cy { color: #2ee6e6; }
.btnrow .ye { color: #c0c000; }
.spacer { flex: 1; }
.btnrow .tpl { width: 45px; border-left: 1px solid #a80000; }
.btnrow .last { width: 76px; border-right: 0; }

.panel { width: 409px; flex: none; box-sizing: border-box; border-left: 2px solid #a80000; overflow: hidden; font-size: 20px; display: flex; flex-direction: column; }
.head { height: 84px; flex: none; box-sizing: border-box; border-bottom: 2px solid #a80000; }
.name { height: 42px; display: flex; align-items: center; padding-left: 51px; gap: 8px; }
.name b { font-size: 28px; font-weight: 400; color: #00dce8; -webkit-text-stroke: .4px #00dce8; }
.name span { font-size: 20px; font-weight: bold; color: #b4b4b4; padding-top: 2px; letter-spacing: .4px; }
.quote { height: 40px; display: grid; grid-template-columns: 142px 153px 1fr; align-items: center; padding: 0 6px 0 3px; color: #00ff00; font-weight: bold; font-size: 28px; }
.quote span:last-child { text-align: right; }
.dn { font-style: normal; font-size: 32px; line-height: 28px; display: inline-block; vertical-align: top; margin-right: -1px; }
.sec { flex: none; box-sizing: border-box; padding: 0 6px 0 3px; border-bottom: 2px solid #a80000; }
.sell-sec { height: 135px; border-bottom: 0; }
.split { height: 2px; flex: none; display: flex; }
.split i:first-child { width: 311px; background: #a8701e; }
.split i:last-child { flex: 1; background: #2f6ea6; }
.buy-sec { height: 139px; padding-top: 2px; }
.st-sec { height: 146px; padding-top: 2.5px; }
.st2-sec { height: 92px; padding-top: 2.5px; }
.fl-sec { height: 120px; padding-top: 3px; }
.lab { font-size: 23px; color: #b8b8b8; }
.pe { font-size: 20px; }
.v { font-weight: bold; text-align: right; letter-spacing: .4px; }
.v small { font-size: 23px; font-weight: 400; letter-spacing: 0; }
.r { color: #f83030; } .g { color: #00e000; } .w { color: #f4f4f4; } .y { color: #c4c400; } .m { color: #d000d0; } .n { color: #b8b8b8; }
.gg { color: #00e400; font-weight: 400; }
.qr { height: 27px; display: grid; grid-template-columns: 66px 130px 1fr; align-items: center; }
.sr { height: 28.5px; display: grid; grid-template-columns: 66px 130px 8px 66px 1fr; align-items: center; }
.fr { height: 28.7px; display: grid; grid-template-columns: 138px 105px 96px 1fr; align-items: center; }
.barcell i { display: block; height: 10px; background: #00ff00; }
.ticks { padding: 2px 6px 0 3px; }
.tr { height: 26.95px; display: grid; grid-template-columns: 66px 130px 118px 46px 1fr; align-items: center; }
.tm { text-align: left; }
.bs { padding-left: 24px; text-align: left; }

.side { flex: 1; background: #f0f0f0; border-left: 2px solid #c8c8c8; box-sizing: border-box; display: flex; flex-direction: column; }
.slot { height: 34.6px; flex: none; display: flex; align-items: center; justify-content: center; }
.sep { flex: none; margin: 0 4px; }
.s1 { height: 12px; background: linear-gradient(#c0c0c0, #c0c0c0) center / 100% 2px no-repeat; }
.s2 { height: 10px; background: linear-gradient(#c0c0c0, #c0c0c0) center / 100% 2px no-repeat; }
.period { font-size: 18px; color: #1c3f9a; }
.sel { background: #fafafa; border-top: 1px solid #a0a0a0; box-sizing: border-box; }

.status { height: 36px; flex: none; box-sizing: border-box; padding-top: 2px; background: #f2f2f2; display: flex; align-items: center; position: relative; }
.st-ico { margin-left: 2px; margin-right: 2px; flex: none; }
.st-item { font-size: 21px; flex: none; color: #111; font-weight: bold; }
.st-item.cn { font-size: 23px; color: #333; font-weight: 400; }
.st-item small { font-size: 23px; font-weight: 400; color: #333; }
.meter { height: 34px; margin-left: 0; padding: 6px 0 0 3px; box-sizing: border-box; border-left: 1px solid #b0b0b0; display: flex; flex-direction: column; gap: 4px; }
.m-top, .m-bot { display: flex; }
.m-top { gap: 2px; }
.m-top i { width: 16px; height: 8px; }
.m-bot { gap: 3px; padding-left: 5px; }
.m-bot i { width: 10px; height: 7px; background: #0a8a0a; }
.mark { position: absolute; left: 1360px; top: 1314px; width: 800px; height: 81px; background: #82aad8; }
.mk-cn, .mk-logo, .mk-en { position: absolute; }
.mk-cn { left: 17px; top: 5px; font-size: 55px; line-height: 68px; font-weight: 700; color: #1a0f8c; font-family: "Noto Sans CJK SC", sans-serif; }
.mk-logo { left: 322px; top: 2px; }
.mk-en { left: 428px; top: 8px; font-size: 56px; line-height: 64px; font-weight: 700; color: #fff; font-family: "DejaVu Serif", serif; letter-spacing: -2.6px; }
</style>
